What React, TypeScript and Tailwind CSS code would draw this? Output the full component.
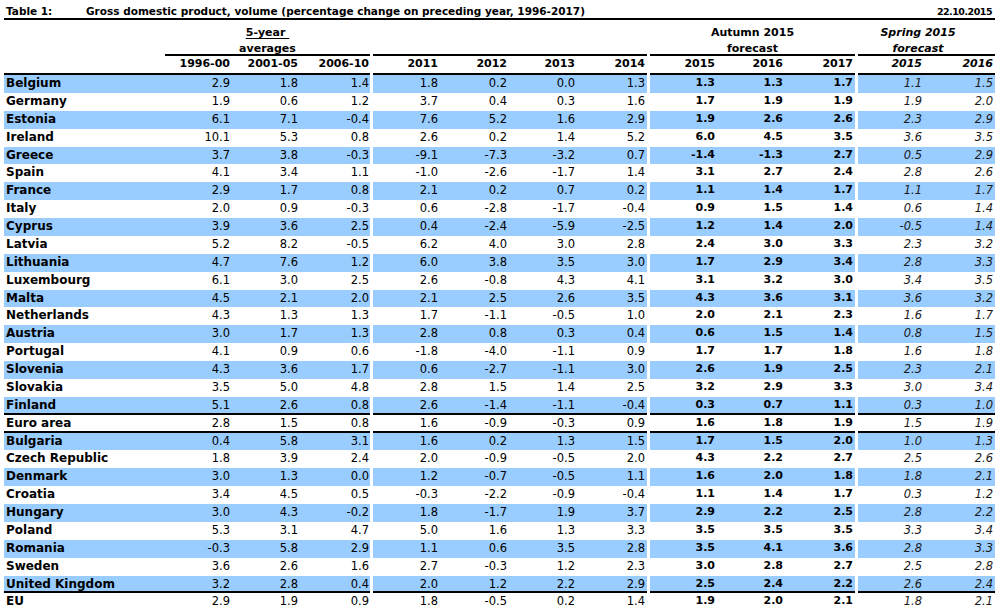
import React from 'react';

type Row = { name: string; v: string[] };

const rows: Row[] = [
  { name: 'Belgium', v: ['2.9', '1.8', '1.4', '1.8', '0.2', '0.0', '1.3', '1.3', '1.3', '1.7', '1.1', '1.5'] },
  { name: 'Germany', v: ['1.9', '0.6', '1.2', '3.7', '0.4', '0.3', '1.6', '1.7', '1.9', '1.9', '1.9', '2.0'] },
  { name: 'Estonia', v: ['6.1', '7.1', '-0.4', '7.6', '5.2', '1.6', '2.9', '1.9', '2.6', '2.6', '2.3', '2.9'] },
  { name: 'Ireland', v: ['10.1', '5.3', '0.8', '2.6', '0.2', '1.4', '5.2', '6.0', '4.5', '3.5', '3.6', '3.5'] },
  { name: 'Greece', v: ['3.7', '3.8', '-0.3', '-9.1', '-7.3', '-3.2', '0.7', '-1.4', '-1.3', '2.7', '0.5', '2.9'] },
  { name: 'Spain', v: ['4.1', '3.4', '1.1', '-1.0', '-2.6', '-1.7', '1.4', '3.1', '2.7', '2.4', '2.8', '2.6'] },
  { name: 'France', v: ['2.9', '1.7', '0.8', '2.1', '0.2', '0.7', '0.2', '1.1', '1.4', '1.7', '1.1', '1.7'] },
  { name: 'Italy', v: ['2.0', '0.9', '-0.3', '0.6', '-2.8', '-1.7', '-0.4', '0.9', '1.5', '1.4', '0.6', '1.4'] },
  { name: 'Cyprus', v: ['3.9', '3.6', '2.5', '0.4', '-2.4', '-5.9', '-2.5', '1.2', '1.4', '2.0', '-0.5', '1.4'] },
  { name: 'Latvia', v: ['5.2', '8.2', '-0.5', '6.2', '4.0', '3.0', '2.8', '2.4', '3.0', '3.3', '2.3', '3.2'] },
  { name: 'Lithuania', v: ['4.7', '7.6', '1.2', '6.0', '3.8', '3.5', '3.0', '1.7', '2.9', '3.4', '2.8', '3.3'] },
  { name: 'Luxembourg', v: ['6.1', '3.0', '2.5', '2.6', '-0.8', '4.3', '4.1', '3.1', '3.2', '3.0', '3.4', '3.5'] },
  { name: 'Malta', v: ['4.5', '2.1', '2.0', '2.1', '2.5', '2.6', '3.5', '4.3', '3.6', '3.1', '3.6', '3.2'] },
  { name: 'Netherlands', v: ['4.3', '1.3', '1.3', '1.7', '-1.1', '-0.5', '1.0', '2.0', '2.1', '2.3', '1.6', '1.7'] },
  { name: 'Austria', v: ['3.0', '1.7', '1.3', '2.8', '0.8', '0.3', '0.4', '0.6', '1.5', '1.4', '0.8', '1.5'] },
  { name: 'Portugal', v: ['4.1', '0.9', '0.6', '-1.8', '-4.0', '-1.1', '0.9', '1.7', '1.7', '1.8', '1.6', '1.8'] },
  { name: 'Slovenia', v: ['4.3', '3.6', '1.7', '0.6', '-2.7', '-1.1', '3.0', '2.6', '1.9', '2.5', '2.3', '2.1'] },
  { name: 'Slovakia', v: ['3.5', '5.0', '4.8', '2.8', '1.5', '1.4', '2.5', '3.2', '2.9', '3.3', '3.0', '3.4'] },
  { name: 'Finland', v: ['5.1', '2.6', '0.8', '2.6', '-1.4', '-1.1', '-0.4', '0.3', '0.7', '1.1', '0.3', '1.0'] },
  { name: 'Euro area', v: ['2.8', '1.5', '0.8', '1.6', '-0.9', '-0.3', '0.9', '1.6', '1.8', '1.9', '1.5', '1.9'] },
  { name: 'Bulgaria', v: ['0.4', '5.8', '3.1', '1.6', '0.2', '1.3', '1.5', '1.7', '1.5', '2.0', '1.0', '1.3'] },
  { name: 'Czech Republic', v: ['1.8', '3.9', '2.4', '2.0', '-0.9', '-0.5', '2.0', '4.3', '2.2', '2.7', '2.5', '2.6'] },
  { name: 'Denmark', v: ['3.0', '1.3', '0.0', '1.2', '-0.7', '-0.5', '1.1', '1.6', '2.0', '1.8', '1.8', '2.1'] },
  { name: 'Croatia', v: ['3.4', '4.5', '0.5', '-0.3', '-2.2', '-0.9', '-0.4', '1.1', '1.4', '1.7', '0.3', '1.2'] },
  { name: 'Hungary', v: ['3.0', '4.3', '-0.2', '1.8', '-1.7', '1.9', '3.7', '2.9', '2.2', '2.5', '2.8', '2.2'] },
  { name: 'Poland', v: ['5.3', '3.1', '4.7', '5.0', '1.6', '1.3', '3.3', '3.5', '3.5', '3.5', '3.3', '3.4'] },
  { name: 'Romania', v: ['-0.3', '5.8', '2.9', '1.1', '0.6', '3.5', '2.8', '3.5', '4.1', '3.6', '2.8', '3.3'] },
  { name: 'Sweden', v: ['3.6', '2.6', '1.6', '2.7', '-0.3', '1.2', '2.3', '3.0', '2.8', '2.7', '2.5', '2.8'] },
  { name: 'United Kingdom', v: ['3.2', '2.8', '0.4', '2.0', '1.2', '2.2', '2.9', '2.5', '2.4', '2.2', '2.6', '2.4'] },
  { name: 'EU', v: ['2.9', '1.9', '0.9', '1.8', '-0.5', '0.2', '1.4', '1.9', '2.0', '2.1', '1.8', '2.1'] },
];

// column widths per group, right padding on the last column of a group
const avgCols = ['w-[66px] pr-[1px]', 'w-[68px] pr-[1px]', 'w-[71px] pr-[1px]'];
const pastCols = ['w-[66px] pr-[1px]', 'w-[69px] pr-[1px]', 'w-[68px] pr-[1px]', 'w-[71px] pr-[2px]'];
const autumnCols = ['w-[66px] pr-[1px]', 'w-[68px] pr-[1px]', 'w-[71px] pr-[2px]'];
const springCols = ['w-[65px] pr-[1px]', 'w-[72px] pr-[2px]'];

const ruled = [18, 19, 28];

function DataRow({ row, index }: { row: Row; index: number }) {
  const bg = index % 2 === 0 ? 'bg-[#99ccff]' : 'bg-white';
  const line = ruled.includes(index) ? 'border-b-2 border-black' : '';
  const group = `flex h-full ${bg} ${line}`;

  return (
    <div className="flex gap-[3px] h-[17.88px] leading-[16px]">
      <div className={group}>
        <div className="w-[161px] shrink-0 pl-[2px] font-bold text-[12px]">{row.name}</div>
        {avgCols.map((c, i) => (
          <div key={i} className={`${c} shrink-0 text-right text-[11.5px]`}>{row.v[i]}</div>
        ))}
      </div>
      <div className={group}>
        {pastCols.map((c, i) => (
          <div key={i} className={`${c} shrink-0 text-right text-[11.5px]`}>{row.v[3 + i]}</div>
        ))}
      </div>
      <div className={group}>
        {autumnCols.map((c, i) => (
          <div key={i} className={`${c} shrink-0 text-right font-bold text-[11px]`}>{row.v[7 + i]}</div>
        ))}
      </div>
      <div className={group}>
        {springCols.map((c, i) => (
          <div key={i} className={`${c} shrink-0 text-right italic text-[11.5px] text-[#1a1a1a]`}>{row.v[10 + i]}</div>
        ))}
      </div>
    </div>
  );
}

export default function App() {
  return (
    <div className="w-[995px] h-[610px] overflow-hidden bg-white pl-[4px] text-black font-['DejaVu_Sans',sans-serif]">
      {/* title */}
      <div className="flex items-start h-[20px] border-b-2 border-black leading-[18px] font-bold">
        <span className="pl-[2px] pt-[2px] text-[10.5px] w-[82px]">Table 1:</span>
        <span className="pt-[2px] text-[10.5px]">
          Gross domestic product, volume (percentage change on preceding year, 1996-2017)
        </span>
        <span className="ml-auto pr-[3px] pt-[3px] text-[9.5px] tracking-[-0.5px]">22.10.2015</span>
      </div>

      {/* group headers */}
      <div className="flex gap-[3px] h-[36px] font-bold text-[11px] leading-[16px]">
        <div className="flex w-[366px]">
          <div className="w-[161px] shrink-0" />
          <div className="w-[205px] shrink-0 border-b-2 border-black pt-[5px] text-center">
            <div>
              <span className="underline underline-offset-2">5-year&nbsp;</span>
            </div>
            <div>averages</div>
          </div>
        </div>
        <div className="w-[274px] border-b-2 border-black" />
        <div className="w-[205px] border-b-2 border-black pt-[5px] text-center">
          <div>Autumn 2015</div>
          <div>forecast</div>
        </div>
        <div className="w-[137px] border-b-2 border-black pt-[5px] pr-[17px] text-center italic">
          <div>Spring 2015</div>
          <div>forecast</div>
        </div>
      </div>

      {/* year headers */}
      <div className="flex gap-[3px] h-[19px] font-bold text-[11px] leading-[16px]">
        <div className="flex border-b-2 border-black">
          <div className="w-[161px] shrink-0" />
          {['1996-00', '2001-05', '2006-10'].map((y, i) => (
            <div key={y} className={`${avgCols[i]} shrink-0 text-right`}>{y}</div>
          ))}
        </div>
        <div className="flex border-b-2 border-black">
          {['2011', '2012', '2013', '2014'].map((y, i) => (
            <div key={y} className={`${pastCols[i]} shrink-0 text-right`}>{y}</div>
          ))}
        </div>
        <div className="flex border-b-2 border-black">
          {['2015', '2016', '2017'].map((y, i) => (
            <div key={y} className={`${autumnCols[i]} shrink-0 text-right`}>{y}</div>
          ))}
        </div>
        <div className="flex border-b-2 border-black italic">
          {['2015', '2016'].map((y, i) => (
            <div key={y} className={`${springCols[i]} shrink-0 text-right`}>{y}</div>
          ))}
        </div>
      </div>

      {rows.map((r, i) => (
        <DataRow key={r.name} row={r} index={i} />
      ))}
    </div>
  );
}
